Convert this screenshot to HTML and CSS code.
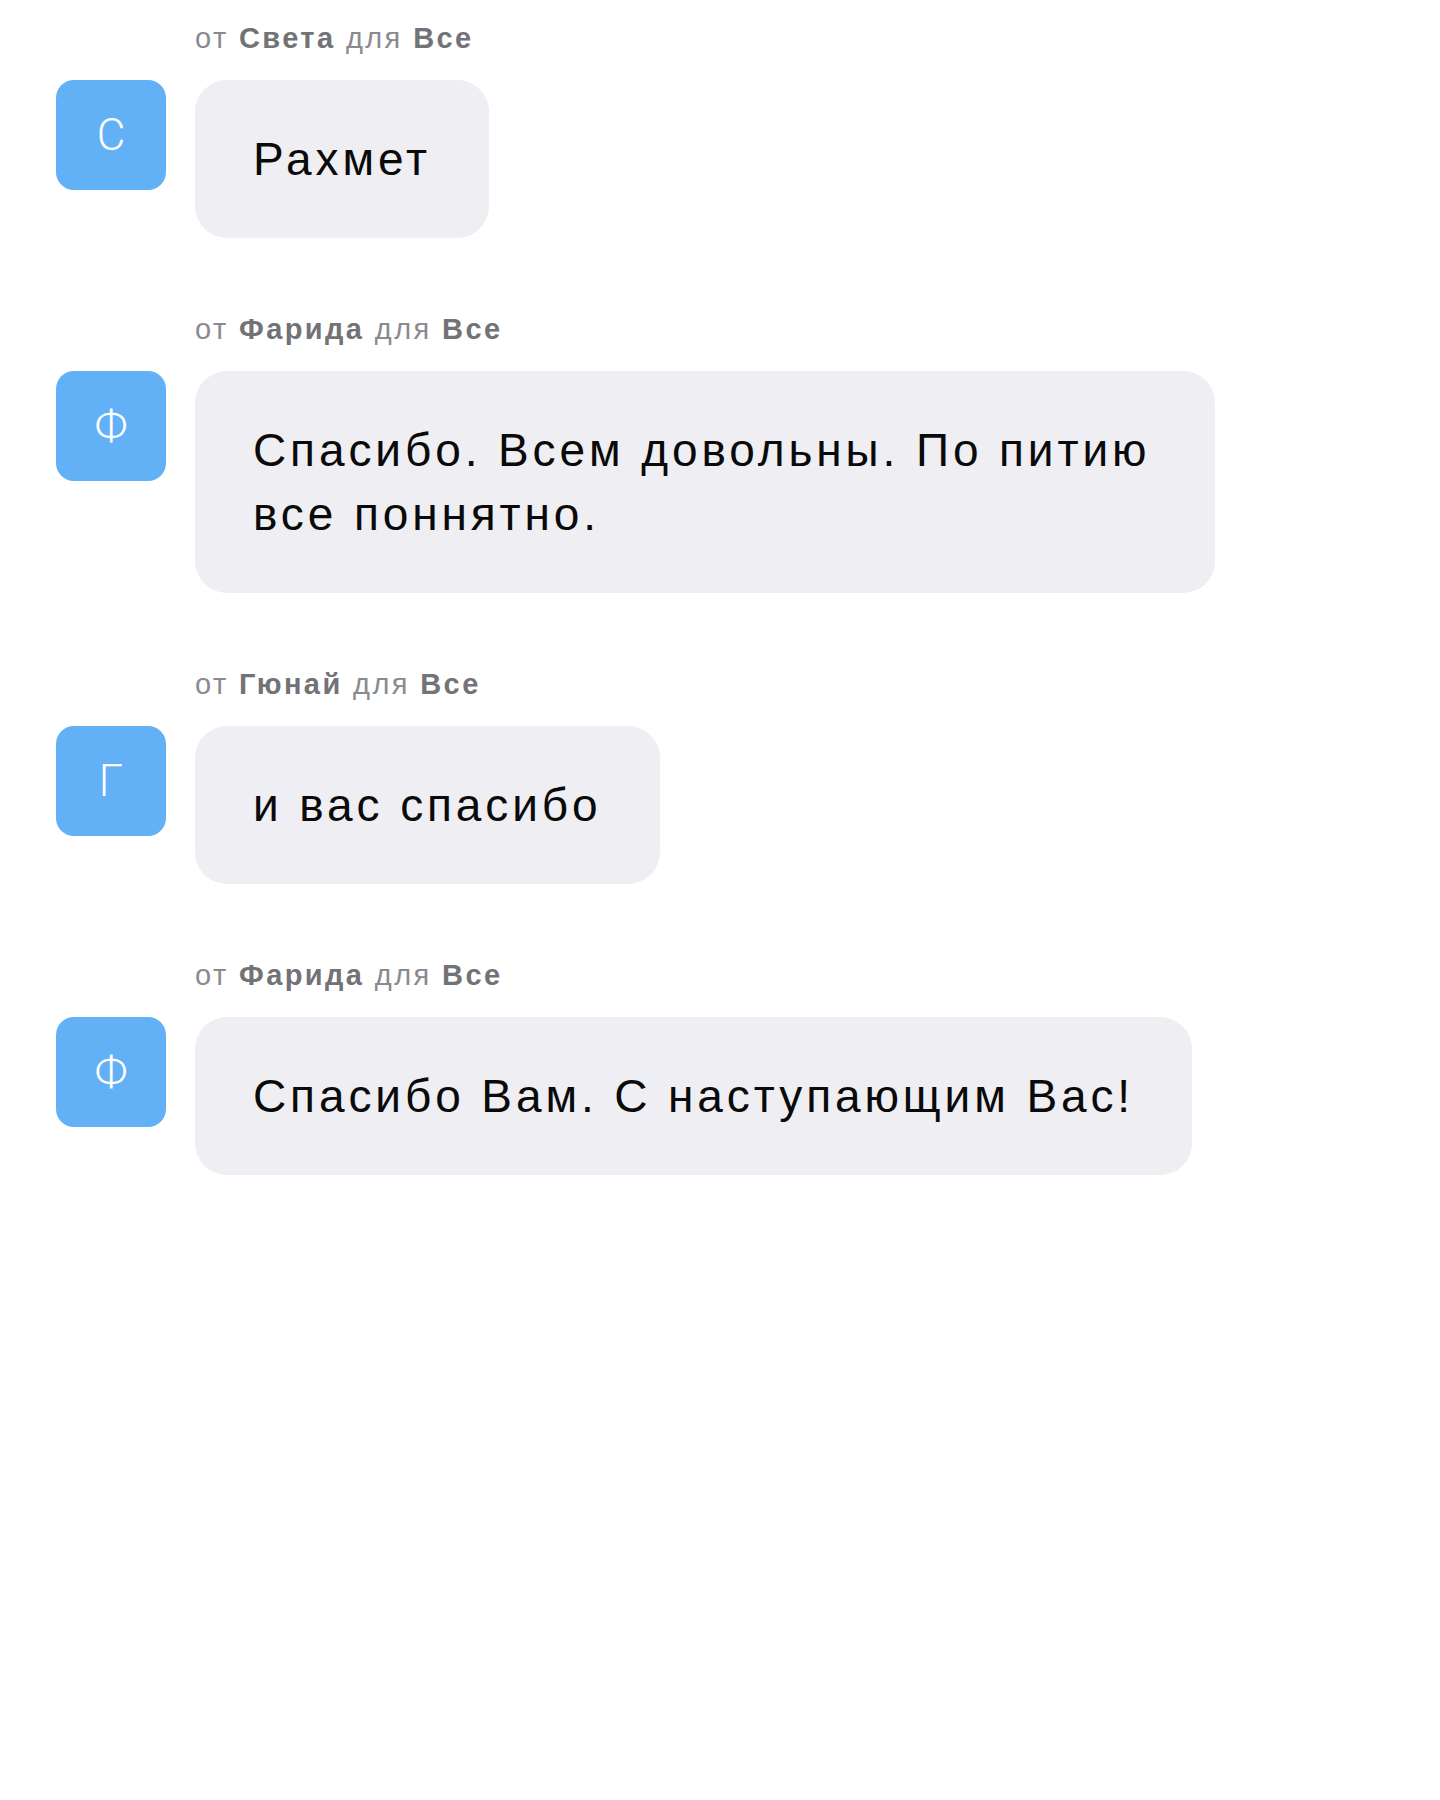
FILE: index.html
```html
<!DOCTYPE html>
<html lang="ru">
<head>
<meta charset="utf-8">
<title>Чат</title>
<link rel="stylesheet" href="styles.css">
</head>
<body>
<div class="chat">
  <div class="msg">
    <div class="meta">от <b>Света</b> для <b>Все</b></div>
    <div class="row">
      <div class="avatar">С</div>
      <div class="bubble">Рахмет</div>
    </div>
  </div>
  <div class="msg">
    <div class="meta">от <b>Фарида</b> для <b>Все</b></div>
    <div class="row">
      <div class="avatar">Ф</div>
      <div class="bubble">Спасибо. Всем довольны. По питию все поннятно.</div>
    </div>
  </div>
  <div class="msg">
    <div class="meta">от <b>Гюнай</b> для <b>Все</b></div>
    <div class="row">
      <div class="avatar">Г</div>
      <div class="bubble">и вас спасибо</div>
    </div>
  </div>
  <div class="msg">
    <div class="meta">от <b>Фарида</b> для <b>Все</b></div>
    <div class="row">
      <div class="avatar">Ф</div>
      <div class="bubble">Спасибо Вам. С наступающим Вас!</div>
    </div>
  </div>
</div>
</body>
</html>
```

FILE: styles.css
```css
html, body {
  margin: 0;
  padding: 0;
  background: #ffffff;
}
body {
  font-family: "Liberation Sans", Arial, sans-serif;
  width: 1440px;
  min-height: 1800px;
}
.chat {
  display: flex;
  flex-direction: column;
  gap: 73px;
  padding: 20px 0 0 56px;
}
.msg {
  display: flex;
  flex-direction: column;
  gap: 24px;
}
.meta {
  margin-left: 139px;
  font-size: 29px;
  line-height: 36px;
  letter-spacing: 2.4px;
  color: #8a8a8f;
}
.meta b {
  font-weight: 700;
  color: #727277;
}
.row {
  display: flex;
  align-items: flex-start;
  gap: 29px;
}
.avatar {
  flex: 0 0 110px;
  width: 110px;
  height: 110px;
  border-radius: 18px;
  background: #62b1f6;
  color: #ffffff;
  display: flex;
  align-items: center;
  justify-content: center;
  font-family: Roboto, "Liberation Sans", sans-serif;
  font-size: 44px;
  font-weight: 300;
  line-height: 1;
}
.bubble {
  box-sizing: border-box;
  max-width: 1020px;
  padding: 47px 58px;
  background: #eeeef3;
  border-radius: 32px;
  font-size: 46px;
  line-height: 64px;
  color: #0a0a0a;
  letter-spacing: 3.9px;
}
```
